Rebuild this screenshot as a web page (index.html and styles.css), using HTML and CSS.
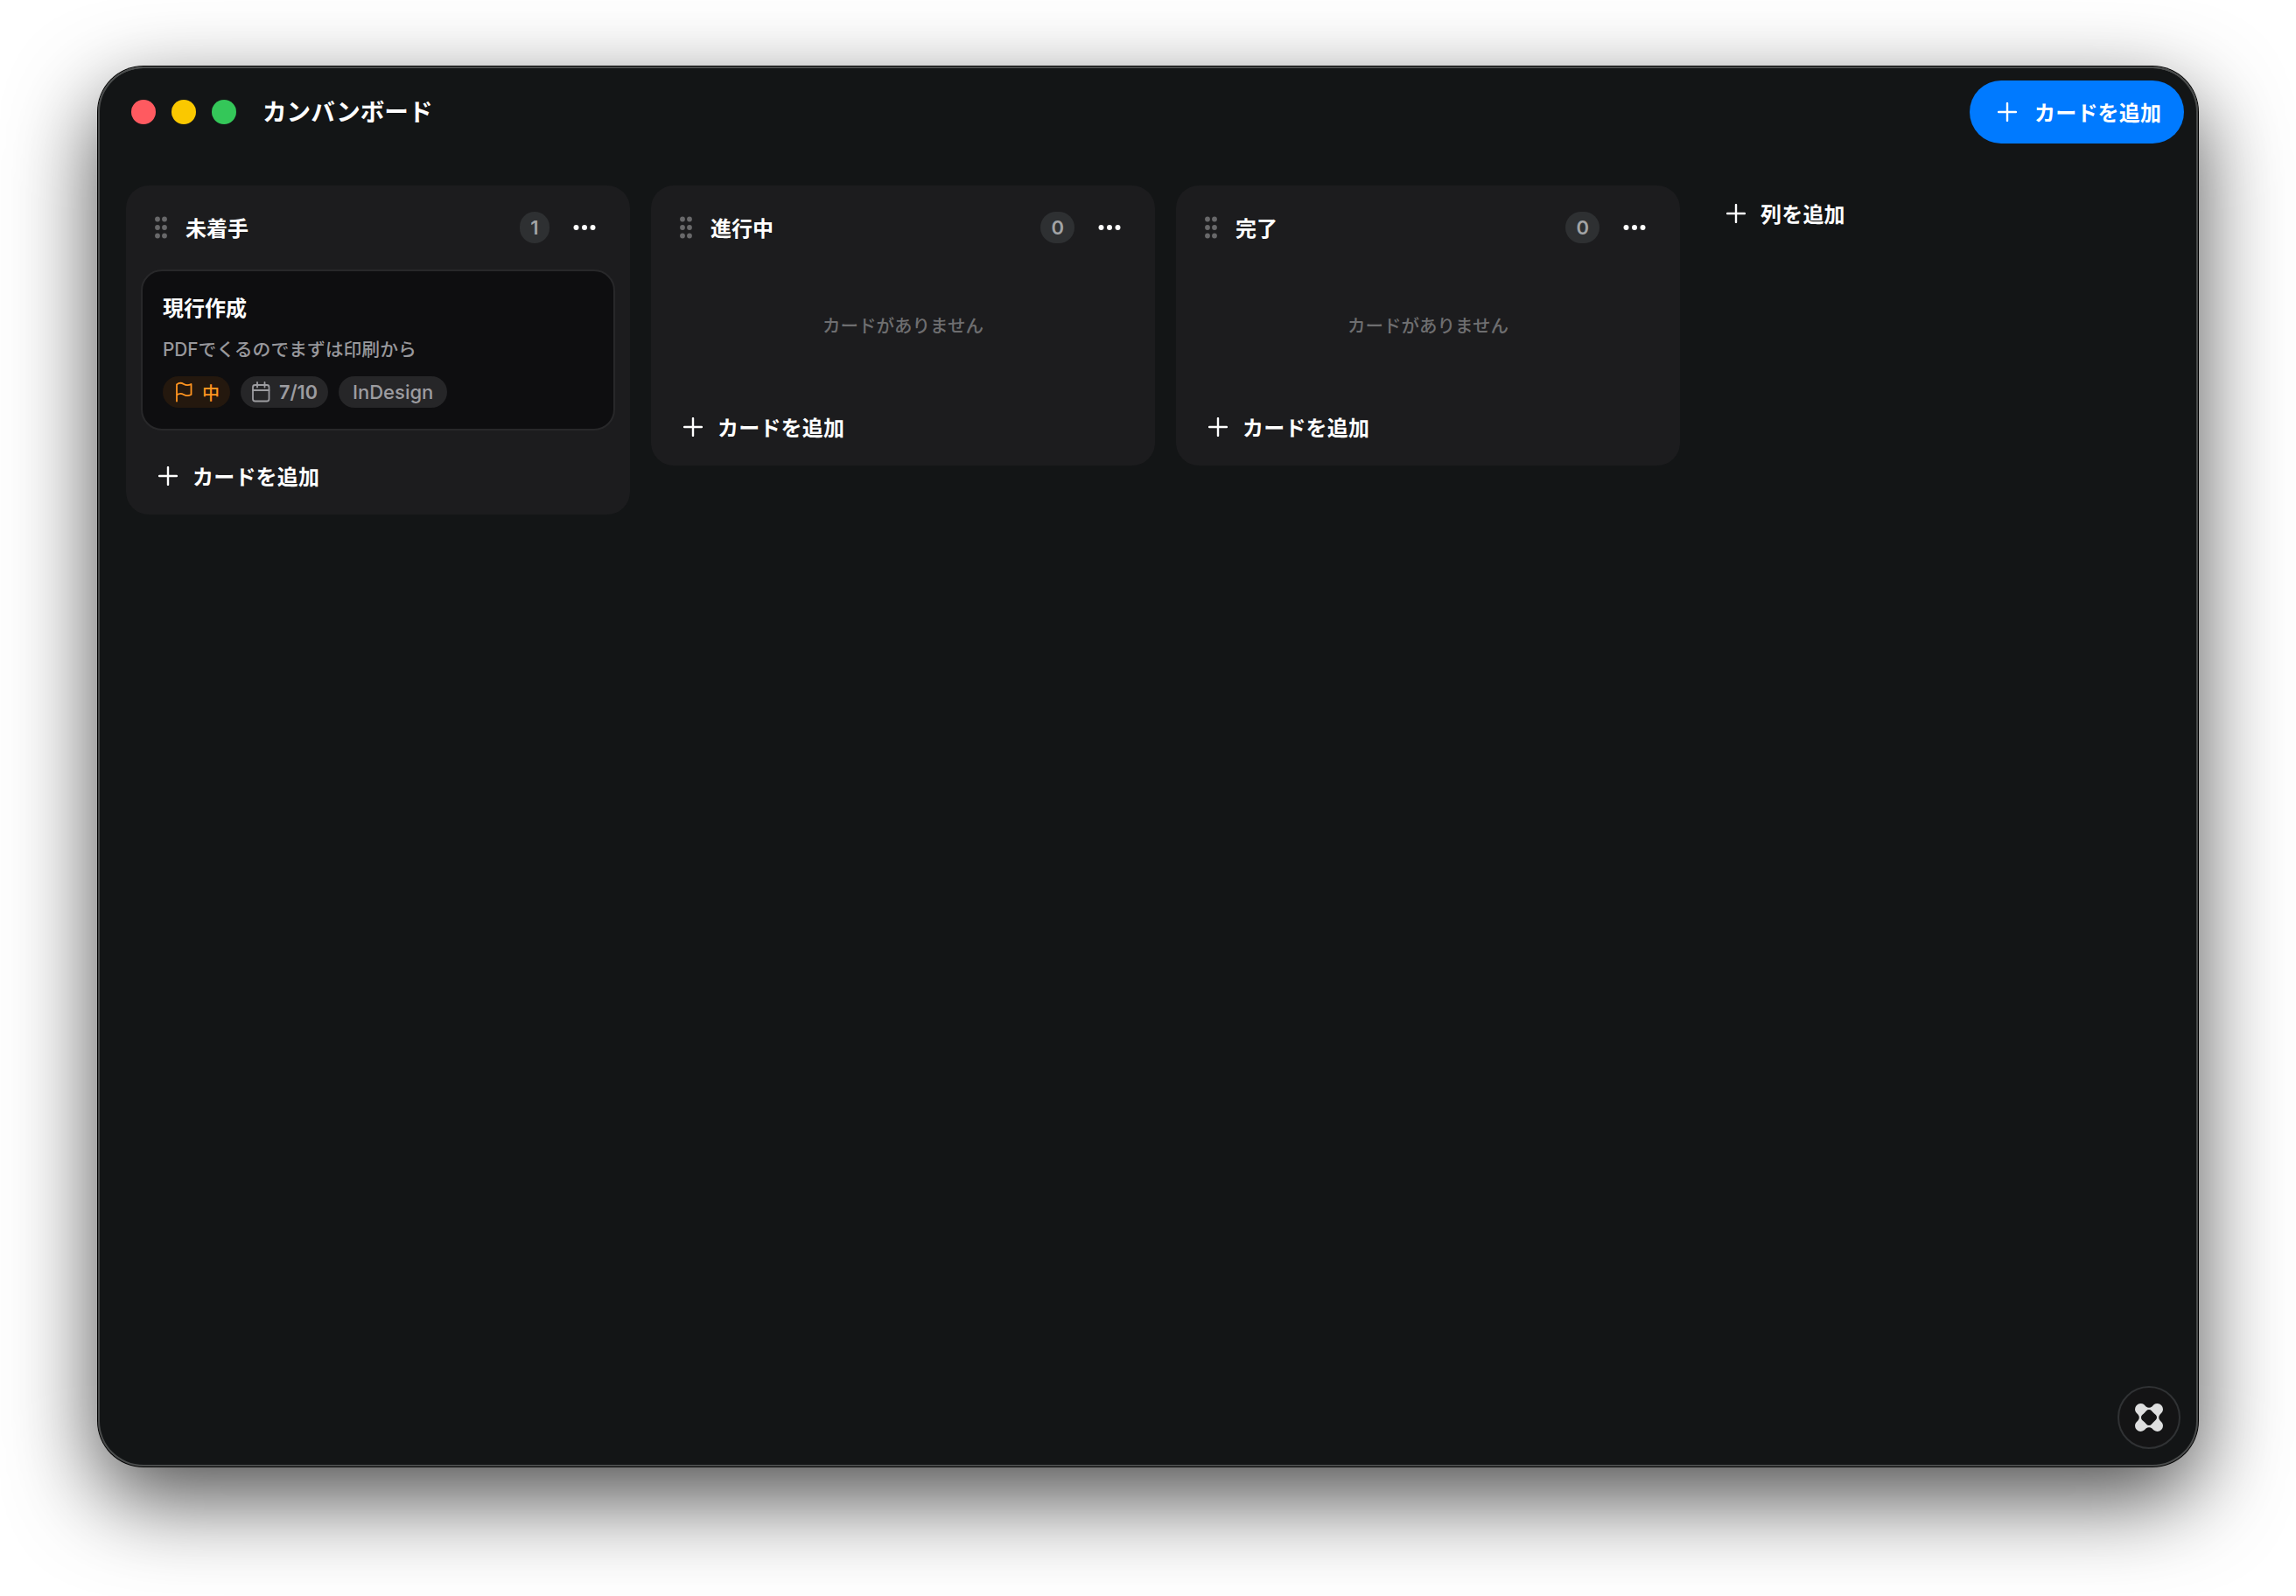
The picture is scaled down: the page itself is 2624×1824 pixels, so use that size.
FILE: index.html
```html
<!DOCTYPE html>
<html lang="ja">

<head>
  <meta charset="UTF-8">
  <meta name="viewport" content="width=device-width, initial-scale=1.0">
  <title>カンバンボード</title>
  <link rel="stylesheet" href="styles.css">
</head>

<body>
  <!-- 共通アイコン -->
  <svg class="sprite" aria-hidden="true">
    <symbol id="plus" viewBox="0 0 22 22">
      <path d="M11 1v20M1 11h20" />
    </symbol>
    <symbol id="grip" viewBox="0 0 14 26">
      <circle cx="3" cy="3.5" r="2.9" />
      <circle cx="11" cy="3.5" r="2.9" />
      <circle cx="3" cy="13" r="2.9" />
      <circle cx="11" cy="13" r="2.9" />
      <circle cx="3" cy="22.5" r="2.9" />
      <circle cx="11" cy="22.5" r="2.9" />
    </symbol>
    <symbol id="dots" viewBox="0 0 26 8">
      <circle cx="3.5" cy="4" r="3" />
      <circle cx="13" cy="4" r="3" />
      <circle cx="22.5" cy="4" r="3" />
    </symbol>
  </svg>

  <div class="window">
    <header class="titlebar">
      <div class="lights">
        <span class="light red"></span>
        <span class="light yellow"></span>
        <span class="light green"></span>
      </div>
      <h1 class="title">カンバンボード</h1>
      <button type="button" class="primary">
        <svg class="plus"><use href="#plus" /></svg>
        <span class="label">カードを追加</span>
      </button>
    </header>

    <main class="board">
      <section class="column">
        <div class="column-head">
          <svg class="grip"><use href="#grip" /></svg>
          <h2>未着手</h2>
          <span class="count">1</span>
          <button type="button" class="more"><svg class="dots"><use href="#dots" /></svg></button>
        </div>
        <article class="card">
          <h3>現行作成</h3>
          <p>PDFでくるのでまずは印刷から</p>
          <div class="chips">
            <span class="chip priority">
              <svg class="flag" viewBox="0 0 20 24">
                <path d="M2 22.500V3.500C4.500 1.300 7.500 1.500 10 3s5.500 1.500 8.500 0v12c-3 1.500-6 1.500-8.500 0s-5.500-1.500-8 .5" />
              </svg>
              中
            </span>
            <span class="chip date">
              <svg class="calendar" viewBox="0 0 22 24">
                <rect x="2" y="4" width="18.500" height="18.500" rx="2.500" />
                <path d="M2 10h18.500M7 1v5.500M15.500 1v5.500" />
              </svg>
              7/10
            </span>
            <span class="chip tag">InDesign</span>
          </div>
        </article>
        <button type="button" class="add"><svg class="plus"><use href="#plus" /></svg><span class="label">カードを追加</span></button>
      </section>

      <section class="column">
        <div class="column-head">
          <svg class="grip"><use href="#grip" /></svg>
          <h2>進行中</h2>
          <span class="count">0</span>
          <button type="button" class="more"><svg class="dots"><use href="#dots" /></svg></button>
        </div>
        <div class="empty">カードがありません</div>
        <button type="button" class="add"><svg class="plus"><use href="#plus" /></svg><span class="label">カードを追加</span></button>
      </section>

      <section class="column">
        <div class="column-head">
          <svg class="grip"><use href="#grip" /></svg>
          <h2>完了</h2>
          <span class="count">0</span>
          <button type="button" class="more"><svg class="dots"><use href="#dots" /></svg></button>
        </div>
        <div class="empty">カードがありません</div>
        <button type="button" class="add"><svg class="plus"><use href="#plus" /></svg><span class="label">カードを追加</span></button>
      </section>

      <button type="button" class="add add-column"><svg class="plus"><use href="#plus" /></svg><span class="label">列を追加</span></button>
    </main>

    <button type="button" class="fab">
      <svg viewBox="0 0 32 32">
        <path fill-rule="evenodd" d="M6.500 0C9.500 0 11 1.800 12.500 3.400Q16 6.200 19.500 3.400C21 1.800 22.500 0 25.500 0A6.500 6.500 0 0 1 32 6.500C32 9.500 30.200 11 28.600 12.500Q25.800 16 28.600 19.500C30.200 21 32 22.500 32 25.500A6.500 6.500 0 0 1 25.500 32C22.500 32 21 30.200 19.500 28.600Q16 25.800 12.500 28.600C11 30.200 9.500 32 6.500 32A6.500 6.500 0 0 1 0 25.500C0 22.500 1.800 21 3.400 19.500Q6.200 16 3.400 12.500C1.800 11 0 9.500 0 6.500A6.500 6.500 0 0 1 6.500 0ZM16 7C13.500 7 12.500 9 10.800 10.800S7 13.500 7 16S9 19.500 10.800 21.200S13.500 25 16 25S19.500 23 21.200 21.200S25 18.500 25 16S23 12.500 21.200 10.800S18.500 7 16 7Z" />
      </svg>
    </button>
  </div>
</body>

</html>
```
FILE: styles.css
```css
* {
  box-sizing: border-box;
}

body {
  margin: 0;
  height: 1824px;
  padding: 76px 112px 0;
  background: #fff;
  color: #fff;
  font-family: Inter, "Noto Sans CJK JP", sans-serif;
  font-size: 24px;
  overflow: hidden;
}

h1,
h2,
h3,
p {
  margin: 0;
}

button {
  border: 0;
  padding: 0;
  background: none;
  color: inherit;
  font: inherit;
}

svg {
  display: block;
  flex: none;
}

.sprite {
  position: absolute;
  width: 0;
  height: 0;
}

.window {
  position: relative;
  width: 2400px;
  height: 1600px;
  border-radius: 52px;
  background: #131516;
  box-shadow: inset 0 0 0 2px #4a4c4c, inset 0 2px 0 #626464, 0 0 0 1px #000, 0 36px 100px rgba(0, 0, 0, 0.7);
}

/* タイトルバー */
.titlebar {
  display: flex;
  align-items: center;
  height: 104px;
  padding: 0 16px 0 38px;
}

.lights {
  display: flex;
  gap: 18px;
}

.light {
  width: 28px;
  height: 28px;
  border-radius: 50%;
}

.red {
  background: #ff5a60;
}

.yellow {
  background: #fac800;
}

.green {
  background: #34c759;
}

.title {
  flex: 1;
  margin-left: 30px;
  padding-bottom: 4px;
  font-size: 27.6px;
  font-weight: 600;
}

.primary {
  display: flex;
  align-items: center;
  gap: 20px;
  width: 245px;
  height: 72px;
  padding-left: 32px;
  border-radius: 36px;
  background: #007aff;
  font-weight: 600;
  white-space: nowrap;
}

.label {
  padding-bottom: 2px;
  letter-spacing: 0.2px;
}

.plus {
  width: 22px;
  height: 22px;
  fill: none;
  stroke: currentColor;
  stroke-width: 2.4;
  stroke-linecap: round;
}

/* ボード */
.board {
  display: flex;
  align-items: flex-start;
  gap: 24px;
  padding: 32px;
}

.column {
  width: 576px;
  padding: 16px 17px 12px;
  border-radius: 26px;
  background: #1c1c1e;
}

.column-head {
  display: flex;
  align-items: center;
  height: 64px;
  padding: 0 22px 0 16px;
}

.column-head h2 {
  flex: 1;
  margin-left: 21px;
  padding-bottom: 2px;
  font-size: 24px;
  font-weight: 600;
}

.grip {
  width: 14px;
  height: 26px;
  fill: #68686a;
}

.count {
  min-width: 34px;
  height: 36px;
  padding: 0 12px;
  border-radius: 18px;
  background: #2e3032;
  color: #a2a4a6;
  font-size: 22px;
  font-weight: 600;
  line-height: 36px;
  text-align: center;
}

.more {
  margin-left: 27px;
}

.dots {
  width: 26px;
  height: 8px;
  fill: #fff;
}

.card {
  height: 184px;
  margin-top: 16px;
  padding: 24px 23px 0;
  border: 2px solid #28282a;
  border-radius: 24px;
  background: #0e0e10;
}

.card h3 {
  font-size: 24px;
  font-weight: 600;
  line-height: 38px;
}

.card p {
  margin-top: 13px;
  color: #98989c;
  font-size: 20.8px;
  font-weight: 500;
  line-height: 30px;
}

.chips {
  display: flex;
  gap: 12px;
  margin-top: 15px;
}

.chip {
  display: flex;
  align-items: center;
  height: 36px;
  border-radius: 18px;
  background: #262628;
  color: #9c9ca0;
  font-size: 22px;
  font-weight: 500;
}

.chip svg {
  fill: none;
  stroke: currentColor;
  stroke-width: 1.8;
  stroke-linecap: round;
  stroke-linejoin: round;
}

.priority {
  gap: 11px;
  padding: 0 12px 0 14px;
  background: #24180e;
  color: #ff9420;
  font-size: 20px;
}

.flag {
  width: 20px;
  height: 24px;
}

.date {
  gap: 10px;
  padding: 0 12px;
  font-size: 21.6px;
  font-weight: 600;
}

.calendar {
  width: 22px;
  height: 24px;
}

.tag {
  padding: 0 16px;
}

.empty {
  height: 164px;
  color: #6e6e70;
  font-size: 20.5px;
  font-weight: 500;
  line-height: 161px;
  text-align: center;
}

.add {
  display: flex;
  align-items: center;
  gap: 17px;
  height: 64px;
  padding-left: 20px;
  font-weight: 600;
}

.card + .add {
  margin-top: 20px;
}

.add-column {
  padding-left: 29px;
}

/* 右下のフローティングボタン */
.fab {
  position: absolute;
  right: 20px;
  bottom: 20px;
  display: grid;
  place-items: center;
  width: 72px;
  height: 72px;
  border: 2px solid #303234;
  border-radius: 50%;
  background: #141415;
}

.fab svg {
  width: 32px;
  height: 32px;
  fill: #dedfdf;
}
```
